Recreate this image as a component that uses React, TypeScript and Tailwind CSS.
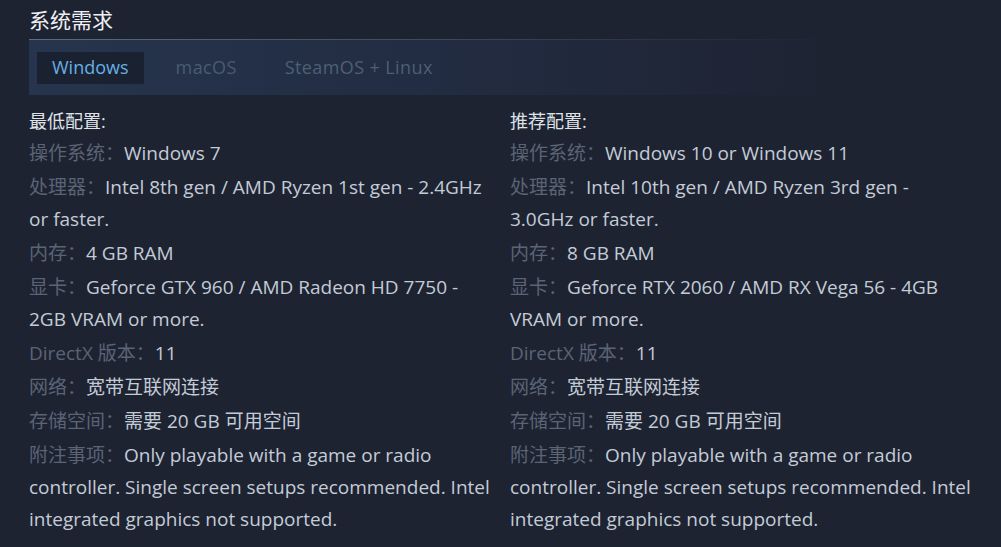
import React from 'react';

type Spec = { label: string; value: string };

const minimum: Spec[] = [
  { label: '操作系统：', value: 'Windows 7' },
  { label: '处理器：', value: 'Intel 8th gen / AMD Ryzen 1st gen - 2.4GHz or faster.' },
  { label: '内存：', value: '4 GB RAM' },
  { label: '显卡：', value: 'Geforce GTX 960 / AMD Radeon HD 7750 - 2GB VRAM or more.' },
  { label: 'DirectX 版本：', value: '11' },
  { label: '网络：', value: '宽带互联网连接' },
  { label: '存储空间：', value: '需要 20 GB 可用空间' },
  {
    label: '附注事项：',
    value: 'Only playable with a game or radio controller. Single screen setups recommended. Intel integrated graphics not supported.',
  },
];

const recommended: Spec[] = [
  { label: '操作系统：', value: 'Windows 10 or Windows 11' },
  { label: '处理器：', value: 'Intel 10th gen / AMD Ryzen 3rd gen -\n3.0GHz or faster.' },
  { label: '内存：', value: '8 GB RAM' },
  { label: '显卡：', value: 'Geforce RTX 2060 / AMD RX Vega 56 - 4GB VRAM or more.' },
  { label: 'DirectX 版本：', value: '11' },
  { label: '网络：', value: '宽带互联网连接' },
  { label: '存储空间：', value: '需要 20 GB 可用空间' },
  {
    label: '附注事项：',
    value: 'Only playable with a game or radio controller. Single screen setups recommended. Intel integrated graphics not supported.',
  },
];

const SpecColumn = ({ title, items }: { title: string; items: Spec[] }) => (
  <div>
    <div className="text-[18px] leading-[32px] text-[#dfe3e8]">{title}</div>
    <ul>
      {items.map((item) => (
        <li key={item.label} className="whitespace-pre-line text-[19px] leading-[32px] mb-[2px] text-[#c3ccd6]">
          <span className="text-[#5b6475]">{item.label}</span>
          {item.value}
        </li>
      ))}
    </ul>
  </div>
);

export default function App() {
  return (
    <div
      className="min-h-[547px] w-[1001px] bg-[#1e2332] pl-[29px] pt-[7px]"
      style={{ fontFamily: '"Open Sans", "Noto Sans CJK SC", sans-serif' }}
    >
      {/* Section title */}
      <h2 className="text-[21px] leading-[26px] text-[#eef0f3]">系统需求</h2>

      {/* OS tabs */}
      <div className="mt-[6px] w-[806px] bg-gradient-to-r from-[#26354d] via-[#222c42] to-[#1e2332]">
        <div className="h-px bg-gradient-to-r from-[#5b6c82] via-[#3c4a5e] to-[#1e2332]" />
        <div className="h-[55px] flex items-center pl-[8px]">
          <div className="flex items-center h-[32px] px-[15px] bg-[#1a2131] text-[18px] text-[#66b0e6]">
            Windows
          </div>
          <div className="ml-[32px] text-[18px] tracking-[0.4px] text-[#4a5b72]">macOS</div>
          <div className="ml-[48px] text-[18px] tracking-[0.4px] text-[#4e5f75]">SteamOS + Linux</div>
        </div>
      </div>

      {/* Requirement columns */}
      <div className="grid grid-cols-[467px_467px] gap-x-[14px] mt-[10px]">
        <SpecColumn title="最低配置:" items={minimum} />
        <SpecColumn title="推荐配置:" items={recommended} />
      </div>
    </div>
  );
}
